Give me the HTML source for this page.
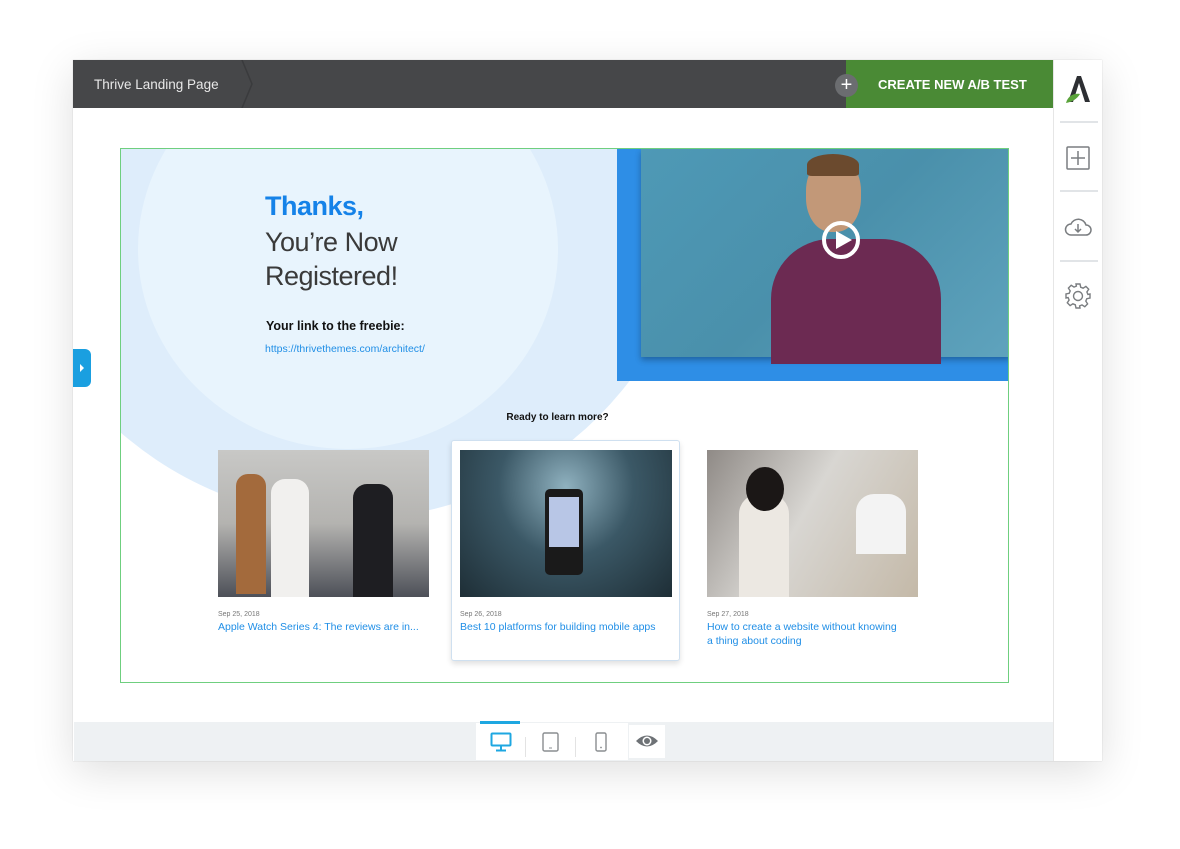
<!DOCTYPE html>
<html><head><meta charset="utf-8"><style>
*{margin:0;padding:0;box-sizing:border-box}
body{width:1180px;height:849px;background:#fff;position:relative;overflow:hidden;font-family:"Liberation Sans",sans-serif}
.a{position:absolute}
.frame{left:73px;top:60px;width:1029px;height:701px;background:#fff;box-shadow:0 10px 40px rgba(0,0,0,0.13),0 0 1px rgba(0,0,0,0.2)}
.date{font-size:7px;color:#777}
.ttl{font-size:10.5px;color:#1f8ee6;line-height:14px;margin-top:2px}
</style></head><body>
<div class="a frame"></div>
<div class="a" style="left:73px;top:60px;width:773px;height:48px;background:#464749"></div>
<svg class="a" style="left:240px;top:60px" width="20" height="48"><path d="M2 0 L12 24 L2 48" stroke="#3a3b3d" stroke-width="1.5" fill="none"/></svg>
<div class="a" style="left:94px;top:77px;font-size:13.5px;color:#e8e8e8">Thrive Landing Page</div>
<div class="a" style="left:846px;top:60px;width:207px;height:48px;background:#4a8a35"></div>
<div class="a" style="left:878px;top:77px;font-size:13px;font-weight:bold;color:#fff">CREATE NEW A/B TEST</div>
<div class="a" style="left:835px;top:74px;width:23px;height:23px;border-radius:50%;background:#6b6d70;color:#fff;font-size:20px;line-height:22px;text-align:center">+</div>
<div class="a" style="left:1053px;top:60px;width:49px;height:701px;background:#fff;border-left:1px solid #e6e6e6"></div>
<svg class="a" style="left:1063px;top:73px" width="30" height="32"><path d="M5 29 L14 3 L18 3 L27 29 L22 29 L16 10 L10 29Z" fill="#2d2f33"/><path d="M3 30 C5 22 12 20 17 21 C14 26 9 29 3 30Z" fill="#5aa33b"/></svg>
<div class="a" style="left:1060px;top:121px;width:38px;height:2px;background:#e1e4e7"></div>
<div class="a" style="left:1060px;top:190px;width:38px;height:2px;background:#e1e4e7"></div>
<div class="a" style="left:1060px;top:260px;width:38px;height:2px;background:#e1e4e7"></div>
<svg class="a" style="left:1066px;top:146px" width="24" height="24"><rect x="1" y="1" width="22" height="22" rx="1" fill="none" stroke="#7a7d80" stroke-width="1.5"/><path d="M12 5v14M5 12h14" stroke="#7a7d80" stroke-width="1.5"/></svg>
<svg class="a" style="left:1063px;top:215px" width="30" height="24"><path d="M8 20 H23 A5 5 0 0 0 23 10 A8 8 0 0 0 8 9 A5.5 5.5 0 0 0 8 20Z" fill="none" stroke="#7a7d80" stroke-width="1.5"/><path d="M15 9v8M12 14l3 3 3-3" fill="none" stroke="#7a7d80" stroke-width="1.5"/></svg>
<svg class="a" style="left:1065px;top:283px" width="26" height="26" viewBox="0 0 26 26"><path d="M11 1h4l.7 3.2 2.4 1 2.8-1.8 2.8 2.8-1.8 2.8 1 2.4L25 11v4l-3.2.7-1 2.4 1.8 2.8-2.8 2.8-2.8-1.8-2.4 1L15 25h-4l-.7-3.2-2.4-1-2.8 1.8-2.8-2.8 1.8-2.8-1-2.4L1 15v-4l3.2-.7 1-2.4L3.4 5.1l2.8-2.8 2.8 1.8 2.4-1Z" fill="none" stroke="#7a7d80" stroke-width="1.4"/><circle cx="13" cy="13" r="4.5" fill="none" stroke="#7a7d80" stroke-width="1.4"/></svg>
<div class="a" style="left:74px;top:722px;width:979px;height:39px;background:#eef1f3"></div>
<div class="a" style="left:476px;top:723px;width:152px;height:37px;background:#fff"></div>
<div class="a" style="left:480px;top:721px;width:40px;height:3px;background:#1ea7e1"></div>
<div class="a" style="left:629px;top:725px;width:36px;height:33px;background:#fff"></div>
<div class="a" style="left:525px;top:737px;width:1px;height:20px;background:#e3e3e3"></div>
<div class="a" style="left:575px;top:737px;width:1px;height:20px;background:#e3e3e3"></div>
<svg class="a" style="left:490px;top:732px" width="22" height="20"><rect x="1.5" y="1.5" width="19" height="12" rx="1" fill="none" stroke="#1ea7e1" stroke-width="2"/><path d="M11 14v4M6 18.5h10" stroke="#1ea7e1" stroke-width="2"/></svg>
<svg class="a" style="left:542px;top:732px" width="18" height="20"><rect x="1" y="1" width="15" height="18" rx="1.5" fill="none" stroke="#8a8d90" stroke-width="1.4"/><path d="M7 16h3" stroke="#8a8d90"/></svg>
<svg class="a" style="left:595px;top:732px" width="12" height="20"><rect x="1" y="1" width="10" height="18" rx="1.5" fill="none" stroke="#8a8d90" stroke-width="1.4"/><circle cx="6" cy="15.5" r="0.9" fill="#8a8d90"/></svg>
<svg class="a" style="left:635px;top:733px" width="24" height="16"><path d="M1 8 Q12 -3 23 8 Q12 19 1 8Z" fill="#6e7276"/><circle cx="12" cy="8" r="4.5" fill="#fff"/><circle cx="12" cy="8" r="3" fill="#6e7276"/></svg>
<div class="a" style="left:73px;top:349px;width:18px;height:38px;background:#1a9fe0;border-radius:0 6px 6px 0"></div>
<svg class="a" style="left:79px;top:364px" width="6" height="8"><path d="M1 0 L5 4 L1 8Z" fill="#fff"/></svg>
<div class="a" style="left:120px;top:148px;width:889px;height:535px;border:1px solid #6fcf7f;overflow:hidden;background:#fff">
  <div class="a" style="top:-330px;width:700px;height:700px;border-radius:50%;background:#deedfb;left:-120px"></div>
  <div class="a" style="left:0;top:0;width:496px;height:232px;background:#deedfb"></div>
  <div class="a" style="left:17px;top:-100px;width:420px;height:400px;border-radius:50%;background:#e8f4fd"></div>
  <div class="a" style="left:144px;top:42px;font-size:27px;font-weight:bold;color:#1582e8;letter-spacing:-0.5px">Thanks,</div>
  <div class="a" style="left:144px;top:76px;font-size:27px;color:#3a3a3a;line-height:34px;font-weight:300;letter-spacing:-0.5px">You’re Now<br>Registered!</div>
  <div class="a" style="left:145px;top:170px;font-size:12.5px;font-weight:bold;color:#111">Your link to the freebie:</div>
  <div class="a" style="left:144px;top:194px;font-size:10.5px;color:#1f8ee6">https://thrivethemes.com/architect/</div>
  <div class="a" style="left:496px;top:0;width:393px;height:232px;background:#2e8ee6"></div>
  <div class="a" style="left:520px;top:0;width:369px;height:208px;background:linear-gradient(135deg,#4e99b6,#4a90ab 50%,#5fa3bd);box-shadow:0 3px 6px rgba(0,0,0,0.3)">
    <div class="a" style="left:130px;top:90px;width:170px;height:125px;border-radius:60px 60px 0 0;background:#6c2a52"></div>
    <div class="a" style="left:165px;top:8px;width:55px;height:75px;border-radius:45%;background:#c29878"></div>
    <div class="a" style="left:166px;top:5px;width:52px;height:22px;border-radius:50% 50% 10% 10%;background:#6b4a2e"></div>
  </div>
  <div class="a" style="left:701px;top:72px;width:38px;height:38px;border-radius:50%;border:4px solid #fff"></div>
  <svg class="a" style="left:713px;top:81px" width="20" height="20"><path d="M2 1 L18 10 L2 19Z" fill="#fff"/></svg>
  <div class="a" style="left:-8px;width:889px;top:263px;text-align:center;font-size:10px;font-weight:bold;color:#111">Ready to learn more?</div>
  <div class="a" style="left:97px;top:301px;width:211px;height:147px;background:linear-gradient(180deg,#c8c8c6,#b4b3b0 50%,#4d5058)"></div>
  <div class="a" style="left:115px;top:325px;width:30px;height:120px;background:#a36a3c;border-radius:12px 12px 0 0"></div>
  <div class="a" style="left:150px;top:330px;width:38px;height:118px;background:#f1f0ee;border-radius:14px 14px 0 0"></div>
  <div class="a" style="left:232px;top:335px;width:40px;height:113px;background:#1e1e22;border-radius:14px 14px 0 0"></div>
  <div class="a" style="left:97px;top:462px"><div class="date">Sep 25, 2018</div><div class="ttl">Apple Watch Series 4: The reviews are in...</div></div>
  <div class="a" style="left:330px;top:291px;width:229px;height:221px;border:1px solid #cfe0f0;border-radius:3px;box-shadow:0 3px 6px rgba(0,0,0,0.12);background:#fff"></div>
  <div class="a" style="left:339px;top:301px;width:212px;height:147px;background:radial-gradient(ellipse at 50% 25%,#8fb1bf,#3b5866 45%,#1e2e36)"></div>
  <div class="a" style="left:424px;top:340px;width:38px;height:86px;background:#1a1a1a;border-radius:5px"></div>
  <div class="a" style="left:428px;top:348px;width:30px;height:50px;background:#b8c6e6"></div>
  <div class="a" style="left:339px;top:462px"><div class="date">Sep 26, 2018</div><div class="ttl">Best 10 platforms for building mobile apps</div></div>
  <div class="a" style="left:586px;top:301px;width:211px;height:147px;background:linear-gradient(120deg,#8f8a86,#d8d6d2 45%,#c4b9a8)"></div>
  <div class="a" style="left:618px;top:345px;width:50px;height:103px;background:#ece8e2;border-radius:20px 20px 0 0"></div>
  <div class="a" style="left:625px;top:318px;width:38px;height:44px;background:#1b1716;border-radius:50%"></div>
  <div class="a" style="left:735px;top:345px;width:50px;height:60px;background:#f3f3f3;border-radius:18px 18px 0 0"></div>
  <div class="a" style="left:586px;top:462px"><div class="date">Sep 27, 2018</div><div class="ttl">How to create a website without knowing<br>a thing about coding</div></div>
</div>
</body></html>
